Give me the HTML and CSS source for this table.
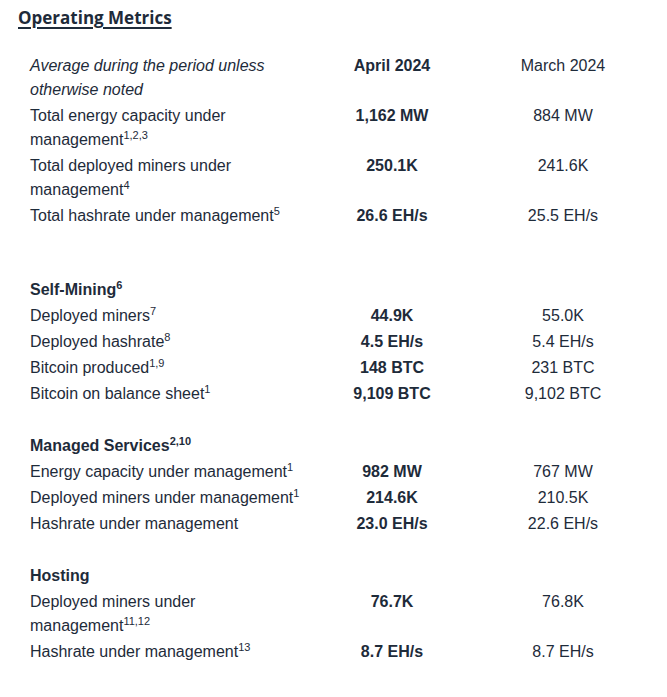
FILE: index.html
```html
<!DOCTYPE html>
<html>
<head>
<meta charset="utf-8">
<link rel="stylesheet" href="styles.css">
</head>
<body>
<div class="page">
  <h2 class="title">Operating Metrics</h2>
  <table class="metrics">
    <colgroup><col class="c1"><col class="c2"><col class="c3"></colgroup>
    <tr>
      <td class="label note">Average during the period unless otherwise noted</td>
      <td class="cur">April 2024</td>
      <td class="prev">March 2024</td>
    </tr>
    <tr>
      <td class="label">Total energy capacity under management<sup>1,2,3</sup></td>
      <td class="cur">1,162 MW</td>
      <td class="prev">884 MW</td>
    </tr>
    <tr>
      <td class="label">Total deployed miners under management<sup>4</sup></td>
      <td class="cur">250.1K</td>
      <td class="prev">241.6K</td>
    </tr>
    <tr>
      <td class="label">Total hashrate under management<sup>5</sup></td>
      <td class="cur">26.6 EH/s</td>
      <td class="prev">25.5 EH/s</td>
    </tr>
    <tr class="spacer big"><td colspan="3"></td></tr>
    <tr>
      <td class="label section">Self-Mining<sup>6</sup></td>
      <td></td><td></td>
    </tr>
    <tr>
      <td class="label">Deployed miners<sup>7</sup></td>
      <td class="cur">44.9K</td>
      <td class="prev">55.0K</td>
    </tr>
    <tr>
      <td class="label">Deployed hashrate<sup>8</sup></td>
      <td class="cur">4.5 EH/s</td>
      <td class="prev">5.4 EH/s</td>
    </tr>
    <tr>
      <td class="label">Bitcoin produced<sup>1,9</sup></td>
      <td class="cur">148 BTC</td>
      <td class="prev">231 BTC</td>
    </tr>
    <tr>
      <td class="label">Bitcoin on balance sheet<sup>1</sup></td>
      <td class="cur">9,109 BTC</td>
      <td class="prev">9,102 BTC</td>
    </tr>
    <tr class="spacer"><td colspan="3"></td></tr>
    <tr>
      <td class="label section">Managed Services<sup>2,10</sup></td>
      <td></td><td></td>
    </tr>
    <tr>
      <td class="label">Energy capacity under management<sup>1</sup></td>
      <td class="cur">982 MW</td>
      <td class="prev">767 MW</td>
    </tr>
    <tr>
      <td class="label">Deployed miners under management<sup>1</sup></td>
      <td class="cur">214.6K</td>
      <td class="prev">210.5K</td>
    </tr>
    <tr>
      <td class="label">Hashrate under management</td>
      <td class="cur">23.0 EH/s</td>
      <td class="prev">22.6 EH/s</td>
    </tr>
    <tr class="spacer"><td colspan="3"></td></tr>
    <tr>
      <td class="label section">Hosting</td>
      <td></td><td></td>
    </tr>
    <tr>
      <td class="label">Deployed miners under management<sup>11,12</sup></td>
      <td class="cur">76.7K</td>
      <td class="prev">76.8K</td>
    </tr>
    <tr>
      <td class="label">Hashrate under management<sup>13</sup></td>
      <td class="cur">8.7 EH/s</td>
      <td class="prev">8.7 EH/s</td>
    </tr>
  </table>
</div>
</body>
</html>
```
FILE: styles.css
```css
html, body {
  margin: 0;
  padding: 0;
  background: #ffffff;
}
body {
  color: #1e2b3a;
  font-family: "Liberation Sans", Arial, sans-serif;
  font-size: 16px;
}
.page {
  padding: 6px 0 0 18px;
}
.title {
  margin: 0;
  font-family: "Open Sans", "Liberation Sans", sans-serif;
  font-weight: 700;
  font-size: 17px;
  line-height: 24px;
  text-decoration: underline;
  text-decoration-thickness: 2px;
  text-underline-offset: 3px;
  color: #1e2b3a;
}
.metrics {
  margin-top: 23px;
  border-collapse: collapse;
  table-layout: fixed;
  width: 632px;
}
.c1 { width: 290px; }
.c2 { width: 168px; }
.c3 { width: 174px; }
.metrics td {
  padding: 1px 0;
  line-height: 24px;
  vertical-align: top;
}
.label {
  padding-left: 12px !important;
  padding-right: 6px !important;
}
.note {
  font-style: italic;
}
.section {
  font-weight: 700;
}
.cur {
  text-align: center;
  font-weight: 700;
}
.prev {
  text-align: center;
}
sup {
  font-size: 11px;
  line-height: 0;
  vertical-align: 6px;
}
.spacer td {
  height: 26px;
  padding: 0;
}
.spacer.big td {
  height: 48px;
}
```
